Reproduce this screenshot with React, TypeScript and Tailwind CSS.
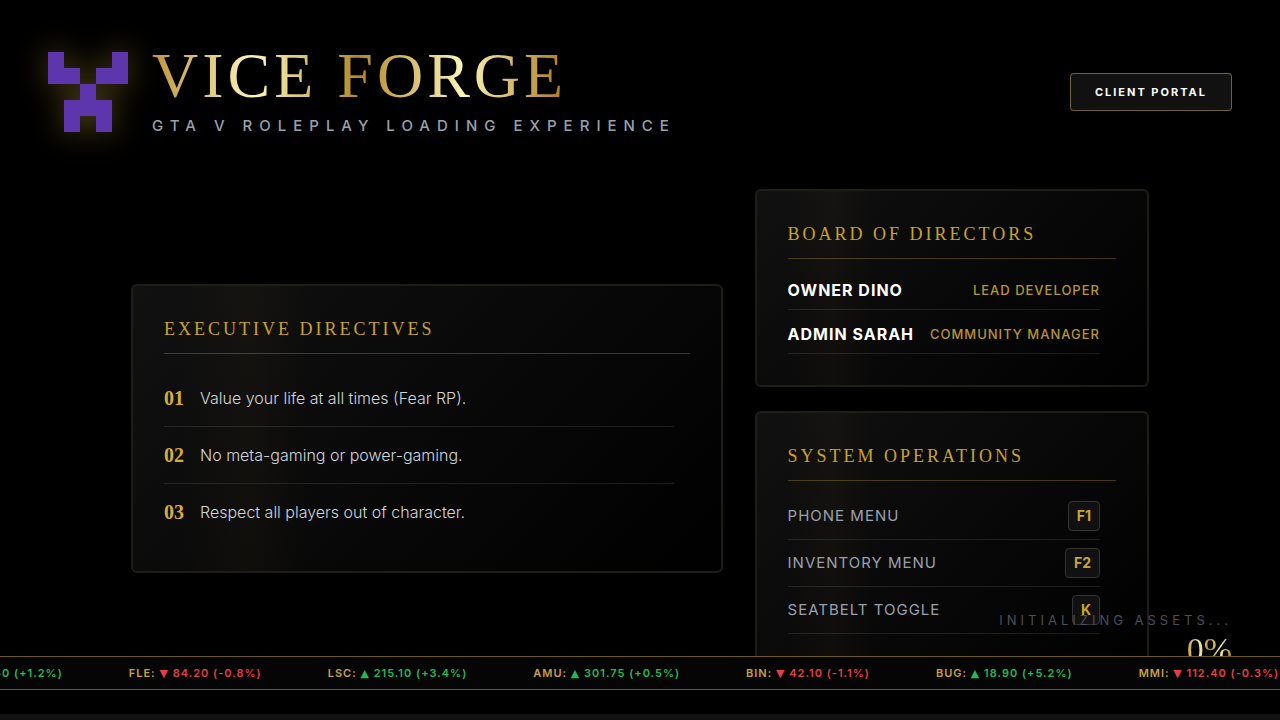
import React from "react";

const directives = [
  "Value your life at all times (Fear RP).",
  "No meta-gaming or power-gaming.",
  "Respect all players out of character.",
];

const directors = [
  { name: "OWNER DINO", role: "LEAD DEVELOPER" },
  { name: "ADMIN SARAH", role: "COMMUNITY MANAGER" },
];

const operations = [
  { label: "PHONE MENU", keyName: "F1" },
  { label: "INVENTORY MENU", keyName: "F2" },
  { label: "SEATBELT TOGGLE", keyName: "K" },
];

const stocks = [
  { symbol: "MAZ", price: "142.50", change: "+1.2%", up: true },
  { symbol: "FLE", price: "84.20", change: "-0.8%", up: false },
  { symbol: "LSC", price: "215.10", change: "+3.4%", up: true },
  { symbol: "AMU", price: "301.75", change: "+0.5%", up: true },
  { symbol: "BIN", price: "42.10", change: "-1.1%", up: false },
  { symbol: "BUG", price: "18.90", change: "+5.2%", up: true },
  { symbol: "MMI", price: "112.40", change: "-0.3%", up: false },
];

const goldText =
  "bg-[linear-gradient(to_right,#bf953f,#fcf6ba,#b38728,#fbf5b7,#aa771c)] bg-clip-text text-transparent";

const Logo: React.FC = () => (
  <svg
    viewBox="0 0 5 5"
    shapeRendering="crispEdges"
    className="h-20 w-20 shrink-0 fill-[#5d36ad] drop-shadow-[0_0_15px_rgba(212,175,55,0.4)]"
    aria-hidden="true"
  >
    <path d="M0 0h1v1h1v1H0zM4 0h1v2H3V1h1zM2 2h1v1h1v2H3V4H2v1H1V3h1z" />
  </svg>
);

interface CardProps {
  title: string;
  children: React.ReactNode;
}

const Card: React.FC<CardProps> = ({ title, children }) => (
  <section className="rounded-md border-2 border-[#1e1d17] bg-[linear-gradient(90deg,transparent_8%,rgba(212,175,55,0.03)_20%,transparent_30%),linear-gradient(135deg,#111111,#000000)] bg-origin-border p-[31px]">
    <h2 className="border-b border-[#d4af37]/30 pb-3 font-['Liberation_Serif',serif] text-lg leading-6 tracking-[3px] text-[#c9a227]">
      {title}
    </h2>
    {children}
  </section>
);

const Header: React.FC = () => (
  <header className="flex items-center justify-between px-12 pt-12">
    <div className="flex items-center gap-6">
      <Logo />
      <div>
        <h1
          className={`w-fit font-['Liberation_Serif',serif] text-[64px] leading-[56px] tracking-[4px] ${goldText}`}
        >
          VICE FORGE
        </h1>
        <p className="mt-3 text-[15px] leading-5 font-medium tracking-[7px] text-gray-400">
          GTA V ROLEPLAY LOADING EXPERIENCE
        </p>
      </div>
    </div>
    <button
      type="button"
      className="rounded-sm border border-[#d4af37]/50 bg-[#111111] px-6 py-2 text-[11px] leading-5 font-bold tracking-[2px] text-white"
    >
      CLIENT PORTAL
    </button>
  </header>
);

const Ticker: React.FC = () => (
  <div className="absolute inset-x-0 bottom-[30px] flex overflow-hidden border-y border-[#d4af37]/50 bg-[#050505]">
    <ul className="-ml-[82px] flex shrink-0 gap-[66px] text-[11px] leading-8 font-semibold tracking-[1px] whitespace-nowrap">
      {stocks.map((stock) => (
        <li key={stock.symbol} className="text-[#c9a23a]">
          {stock.symbol}:{" "}
          <span className={stock.up ? "text-[#22b858]" : "text-[#e04040]"}>
            <span className="font-['DejaVu_Sans',sans-serif] leading-none">
              {stock.up ? "▲" : "▼"}
            </span>{" "}
            {stock.price} ({stock.change})
          </span>
        </li>
      ))}
    </ul>
  </div>
);

const App: React.FC = () => {
  return (
    <div className="relative h-screen overflow-hidden bg-black font-[Inter,sans-serif] text-white">
      <Header />

      <main className="mx-auto mt-[53px] grid max-w-[1018px] grid-cols-[3fr_2fr] items-center gap-8">
        <Card title="EXECUTIVE DIRECTIVES">
          <ol className="mt-4 divide-y divide-white/10 pr-4">
            {directives.map((rule, i) => (
              <li key={rule} className="flex items-center gap-4 py-4">
                <span className="font-['Liberation_Serif',serif] text-xl leading-6 font-bold text-[#d4af37]">
                  0{i + 1}
                </span>
                <span className="leading-6 font-light text-gray-300">
                  {rule}
                </span>
              </li>
            ))}
          </ol>
        </Card>

        <div className="flex flex-col gap-6">
          <Card title="BOARD OF DIRECTORS">
            <ul className="mt-5 flex flex-col gap-[13px] pr-4">
              {directors.map((person) => (
                <li
                  key={person.name}
                  className="flex items-center justify-between border-b border-white/10 pb-2 leading-[22px]"
                >
                  <span className="font-bold tracking-[1px]">
                    {person.name}
                  </span>
                  <span className="text-[13px] font-medium tracking-[1px] text-[#b8962e]">
                    {person.role}
                  </span>
                </li>
              ))}
            </ul>
          </Card>

          <Card title="SYSTEM OPERATIONS">
            <ul className="mt-5 flex flex-col gap-2 pr-4">
              {operations.map((op) => (
                <li
                  key={op.label}
                  className="flex items-center justify-between border-b border-white/10 pb-2"
                >
                  <span className="text-[15px] leading-5 tracking-[1px] text-gray-400">
                    {op.label}
                  </span>
                  <kbd className="rounded-sm border border-[#333333] bg-[#111111] px-2 py-1 font-[Inter,sans-serif] text-sm leading-5 font-bold text-[#c9a633]">
                    {op.keyName}
                  </kbd>
                </li>
              ))}
            </ul>
          </Card>
        </div>
      </main>

      {/* Loading status, partly covered by the ticker */}
      <div className="absolute right-12 bottom-12 flex flex-col items-end">
        <p className="text-[13px] leading-4 tracking-[4px] text-[#4b4f5c]">
          INITIALIZING ASSETS...
        </p>
        <p
          className={`font-['Liberation_Serif',serif] text-[34px] leading-[44px] ${goldText}`}
        >
          0%
        </p>
      </div>

      <Ticker />
      <div className="absolute inset-x-0 bottom-0 h-[6px] bg-[#111111]" />
    </div>
  );
};

export default App;
